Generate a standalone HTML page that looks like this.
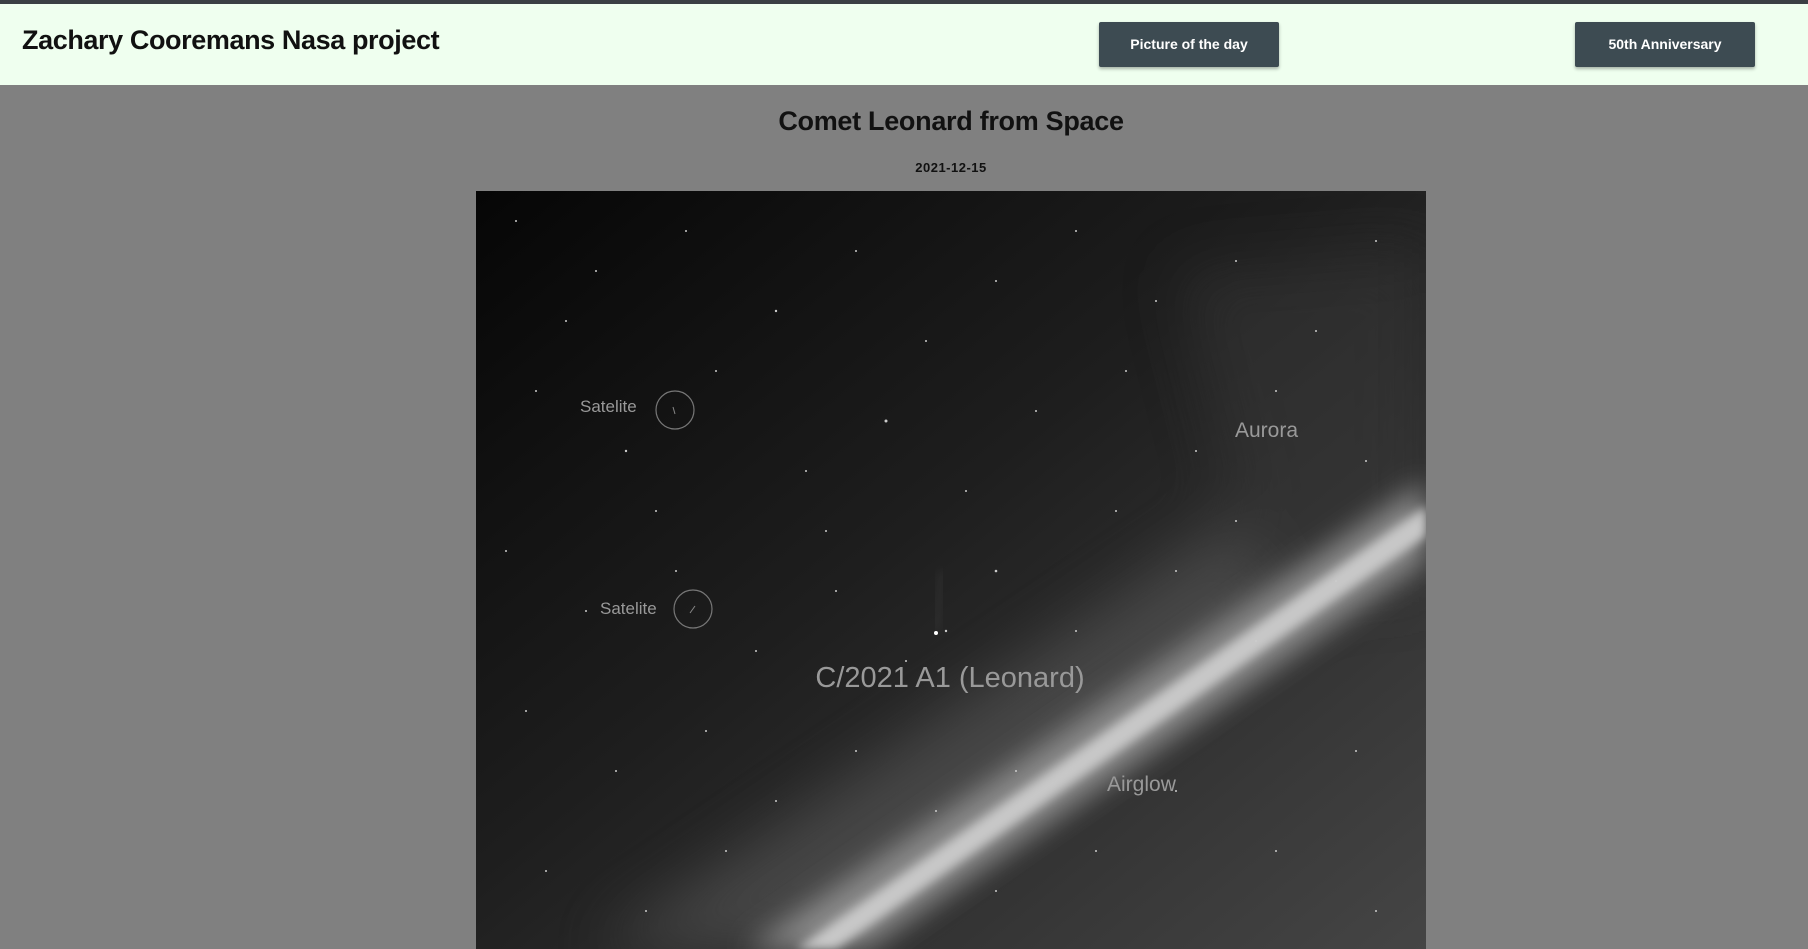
<!DOCTYPE html>
<html><head><meta charset="utf-8">
<style>
html,body{margin:0;padding:0;width:1808px;height:949px;overflow:hidden;background:#808080;font-family:"Liberation Sans",Arial,sans-serif;}
.top{position:absolute;left:0;top:0;width:1808px;height:4px;background:#3a3f44;}
header{position:absolute;left:0;top:4px;width:1808px;height:81px;background:#efffef;}
header h1{position:absolute;left:22px;top:21px;margin:0;font-size:27px;font-weight:bold;color:#111;letter-spacing:-0.4px;}
.btn{position:absolute;top:18px;width:180px;height:45px;background:#3d4b52;color:#fff;font-size:14px;font-weight:bold;text-align:center;line-height:45px;border-radius:2px;box-shadow:0 2px 3px rgba(0,0,0,.3);}
h2{position:absolute;left:0;width:1902px;top:106px;margin:0;text-align:center;font-size:27px;font-weight:bold;color:#111;letter-spacing:-0.3px;}
.date{position:absolute;left:0;width:1902px;top:160px;text-align:center;font-size:13px;font-weight:bold;color:#111;letter-spacing:.5px;}
.img{position:absolute;left:476px;top:191px;width:950px;height:758px;}
</style></head><body>
<div class="top"></div>
<header><h1>Zachary Cooremans Nasa project</h1>
<div class="btn" style="left:1099px">Picture of the day</div>
<div class="btn" style="left:1575px">50th Anniversary</div></header>
<h2>Comet Leonard from Space</h2>
<div class="date">2021-12-15</div>
<svg class="img" viewBox="0 0 950 758" xmlns="http://www.w3.org/2000/svg">
<defs>
<linearGradient id="bg" x1="0" y1="0" x2="1" y2="1">
<stop offset="0" stop-color="#060606"/><stop offset="0.45" stop-color="#1e1e1e"/><stop offset="0.8" stop-color="#383838"/><stop offset="1" stop-color="#454545"/></linearGradient>
<filter id="blur"><feGaussianBlur stdDeviation="30"/></filter>
<filter id="blur2"><feGaussianBlur stdDeviation="14"/></filter>
<filter id="blur3"><feGaussianBlur stdDeviation="5"/></filter>
</defs>
<rect width="950" height="758" fill="url(#bg)"/>
<g filter="url(#blur)" opacity="0.45">
<polygon points="120,758 950,200 950,330 330,758" fill="#666"/>
<polygon points="700,80 950,60 950,400 780,400" fill="#3a3a3a"/>
</g>
<g filter="url(#blur2)">
<polygon points="270,758 950,290 950,370 390,758" fill="#8a8a8a"/>
</g>
<g filter="url(#blur3)">
<polygon points="320,758 950,315 950,345 360,758" fill="#c8c8c8"/>
</g>
<g fill="#ccc">
<circle cx="40" cy="30" r="1"/><circle cx="120" cy="80" r="1"/><circle cx="210" cy="40" r="1"/><circle cx="300" cy="120" r="1.2"/><circle cx="380" cy="60" r="1"/><circle cx="450" cy="150" r="1"/><circle cx="520" cy="90" r="1"/><circle cx="600" cy="40" r="1"/><circle cx="680" cy="110" r="1"/><circle cx="760" cy="70" r="1"/><circle cx="840" cy="140" r="1"/><circle cx="900" cy="50" r="1"/><circle cx="60" cy="200" r="1"/><circle cx="150" cy="260" r="1.2"/><circle cx="240" cy="180" r="1"/><circle cx="330" cy="280" r="1"/><circle cx="410" cy="230" r="1.5"/><circle cx="490" cy="300" r="1"/><circle cx="560" cy="220" r="1"/><circle cx="640" cy="320" r="1"/><circle cx="720" cy="260" r="1"/><circle cx="800" cy="200" r="1"/><circle cx="890" cy="270" r="1"/><circle cx="30" cy="360" r="1"/><circle cx="110" cy="420" r="1"/><circle cx="200" cy="380" r="1"/><circle cx="280" cy="460" r="1"/><circle cx="360" cy="400" r="1"/><circle cx="430" cy="470" r="1"/><circle cx="520" cy="380" r="1.3"/><circle cx="600" cy="440" r="1"/><circle cx="700" cy="380" r="1"/><circle cx="780" cy="450" r="1"/><circle cx="860" cy="390" r="1"/><circle cx="50" cy="520" r="1"/><circle cx="140" cy="580" r="1"/><circle cx="230" cy="540" r="1"/><circle cx="300" cy="610" r="1"/><circle cx="380" cy="560" r="1"/><circle cx="460" cy="620" r="1"/><circle cx="540" cy="580" r="1"/><circle cx="620" cy="660" r="1"/><circle cx="700" cy="600" r="1"/><circle cx="800" cy="660" r="1"/><circle cx="880" cy="560" r="1"/><circle cx="70" cy="680" r="1"/><circle cx="170" cy="720" r="1"/><circle cx="250" cy="660" r="1"/><circle cx="520" cy="700" r="1"/><circle cx="900" cy="720" r="1"/><circle cx="90" cy="130" r="1"/><circle cx="180" cy="320" r="1"/><circle cx="350" cy="340" r="1"/><circle cx="650" cy="180" r="1"/><circle cx="760" cy="330" r="1"/><circle cx="470" cy="440" r="1.2"/>
</g>
<line x1="460" y1="440" x2="466" y2="380" stroke="#555" stroke-width="5" opacity="0.35" filter="url(#blur3)"/>
<circle cx="460" cy="442" r="2" fill="#fff"/>
<g fill="#999" font-family="Liberation Sans,Arial,sans-serif">
<text x="104" y="221" font-size="17">Satelite</text>
<text x="124" y="423" font-size="17">Satelite</text>
<text x="759" y="246" font-size="21">Aurora</text>
<text x="474" y="496" font-size="29" text-anchor="middle">C/2021 A1 (Leonard)</text>
<text x="631" y="600" font-size="21">Airglow</text>
</g>
<circle cx="199" cy="219" r="19" fill="none" stroke="#777" stroke-width="1.2"/>
<circle cx="217" cy="418" r="19" fill="none" stroke="#777" stroke-width="1.2"/>
<line x1="197" y1="216" x2="199" y2="223" stroke="#888"/>
<line x1="214" y1="422" x2="219" y2="415" stroke="#888"/>
</svg>
</body></html>
